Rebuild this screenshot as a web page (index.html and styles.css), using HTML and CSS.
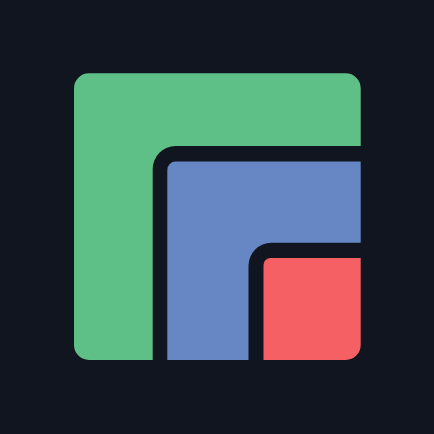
FILE: index.html
```html
<!DOCTYPE html>
<html lang="en">
<head>
<meta charset="utf-8">
<title>Logo</title>
<link rel="stylesheet" href="styles.css">
</head>
<body>
<svg class="logo" viewBox="0 0 434 434" role="img" aria-label="Logo">
  <path class="green" d="M89 73.3H345.7a15 15 0 0 1 15 15V360H89a15 15 0 0 1-15-15V88.3a15 15 0 0 1 15-15Z"/>
  <path class="bg" d="M152.7 361V169a23 23 0 0 1 23-23H361V361Z"/>
  <path class="blue" d="M167.3 360V170a8.4 8.4 0 0 1 8.4-8.4H360.7V360Z"/>
  <path class="bg" d="M248.5 361V265.7a23 23 0 0 1 23-23H361V361Z"/>
  <path class="red" d="M263.5 360V265a7 7 0 0 1 7-7H360.7V345a15 15 0 0 1-15 15Z"/>
</svg>
</body>
</html>
```
FILE: styles.css
```css
html, body {
  margin: 0;
  padding: 0;
  background: #11151f;
}
.logo {
  display: block;
  width: 434px;
  height: 434px;
}
.green { fill: #5fc087; }
.blue { fill: #6687c4; }
.red { fill: #f56064; }
.bg { fill: #11151f; }
```
